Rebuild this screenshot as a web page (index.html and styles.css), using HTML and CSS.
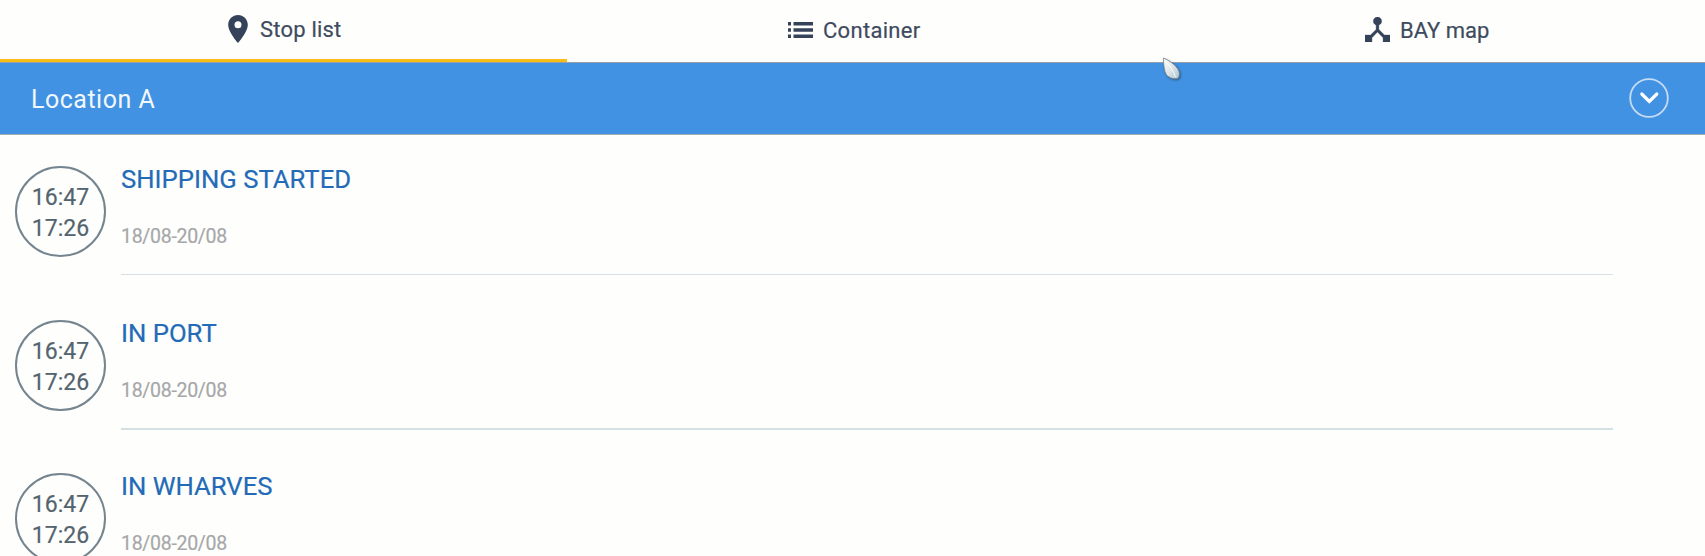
FILE: index.html
```html
<!DOCTYPE html>
<html lang="en">
<head>
<meta charset="utf-8">
<title>Stop list</title>
<link rel="stylesheet" href="styles.css">
</head>
<body>
<nav class="tabs">
  <a class="tab tab-stops active">
    <svg class="icon pin" viewBox="5 2 14 20"><path d="M12 2C8.130 2 5 5.130 5 9c0 5.250 7 13 7 13s7-7.750 7-13c0-3.870-3.130-7-7-7zm0 9.500a2.500 2.500 0 1 1 0-5 2.500 2.500 0 0 1 0 5z"/></svg>
    <span class="label">Stop list</span>
  </a>
  <a class="tab tab-container">
    <svg class="icon list" viewBox="0 0 25 16"><path d="M0 0h3v3.500H0zM0 6.250h3v3.500H0zM0 12.500h3V16H0zM5.500 0H25v3.500H5.500zM5.500 6.250H25v3.500H5.500zM5.500 12.500H25V16H5.500z"/></svg>
    <span class="label">Container</span>
  </a>
  <a class="tab tab-bay">
    <svg class="icon hub" viewBox="3 3 18 18"><path d="M17 16l-4-4V8.820C14.160 8.400 15 7.300 15 6c0-1.660-1.340-3-3-3S9 4.340 9 6c0 1.300.84 2.400 2 2.820V12l-4 4H3v5h5v-3.050l4-4.200 4 4.200V21h5v-5h-4z"/></svg>
    <span class="label">BAY map</span>
  </a>
</nav>
<header class="location">
  <h1 class="location-name">Location A</h1>
  <svg class="toggle" viewBox="0 0 40 40"><circle cx="20" cy="20" r="18.800"/><path d="M12.800 16l7.500 7.500 7.500-7.500"/></svg>
</header>
<main class="stops">
  <section class="stop">
    <div class="times"><span>16:47</span><span>17:26</span></div>
    <div class="details"><h2 class="title">SHIPPING STARTED</h2><p class="dates">18/08-20/08</p></div>
  </section>
  <section class="stop">
    <div class="times"><span>16:47</span><span>17:26</span></div>
    <div class="details strong"><h2 class="title">IN PORT</h2><p class="dates">18/08-20/08</p></div>
  </section>
  <section class="stop">
    <div class="times"><span>16:47</span><span>17:26</span></div>
    <div class="details"><h2 class="title">IN WHARVES</h2><p class="dates">18/08-20/08</p></div>
  </section>
</main>
<svg class="pointer" viewBox="0 0 24 28">
  <defs><linearGradient id="leaf" x1="0" y1="0" x2="1" y2="1"><stop offset="0" stop-color="#fff"/><stop offset=".5" stop-color="#dfe5e7"/><stop offset="1" stop-color="#a9c4d3"/></linearGradient></defs>
  <path class="leaf" d="M3.500 2C9 4.500 14.500 8 17.500 12.500c2.300 3.500 2.500 7 .5 9.800-4 1.200-8.500-.3-11.500-3.300C4 14.500 3.500 8 3.500 2z"/>
  <path class="vein" d="M5 5c4.500 4.500 8.500 9.500 10.500 16"/>
</svg>
</body>
</html>
```
FILE: styles.css
```css
* { box-sizing: border-box; }
body {
  margin: 0;
  height: 556px;
  overflow: hidden;
  background: #fefefd;
  font-family: Roboto, sans-serif;
}
h1, h2, p { margin: 0; font-weight: 400; }
.tabs {
  display: grid;
  grid-template-columns: 567px 570px 568px;
  height: 63px;
  border-bottom: 1px solid #999da5;
}
.tab {
  display: flex;
  align-items: flex-start;
  color: #3e4b5e;
  font-size: 22px;
  line-height: 26px;
}
.active { border-bottom: 3px solid #f8bd16; letter-spacing: 0.200px; }
.tab-stops { padding: 17px 0 0 228px; }
.tab-container { padding: 18px 0 0 221px; letter-spacing: 0.300px; }
.tab-bay { padding: 18px 0 0 228px; }
.icon { fill: #35435a; flex: none; }
.pin { width: 20px; height: 28px; margin: -2px 12px 0 0; }
.list { width: 25px; height: 16px; margin: 4px 10px 0 0; }
.hub { width: 25px; height: 25px; margin: -1px 10px 0 0; stroke: #35435a; stroke-width: 0.250; }
.label { -webkit-text-stroke: 0.200px #3e4b5e; }
.location {
  display: flex;
  align-items: flex-start;
  justify-content: space-between;
  height: 72px;
  padding: 15px 36px 0 31px;
  background: #4192e3;
  border-bottom: 1px solid #a1adb9;
}
.location-name { color: #f2f7fc; font-size: 25px; line-height: 44px; letter-spacing: 0.500px; }
.toggle { width: 40px; height: 40px; fill: none; stroke-width: 1.800; stroke: #c5dcf4; }
.toggle path { stroke: #fff; stroke-width: 3.200; stroke-linecap: round; }
.stops { height: 421px; overflow: hidden; padding-left: 15px; }
.stop { display: flex; gap: 15px; height: 153.700px; padding-top: 31px; }
.times {
  display: flex;
  flex-direction: column;
  align-items: center;
  flex: none;
  width: 91px;
  height: 91px;
  padding-top: 14px;
  border: 2px solid #75858f;
  border-radius: 50%;
  color: #53646f;
  font-size: 23px;
  line-height: 31px;
  -webkit-text-stroke: 0.200px #53646f;
}
.details {
  width: 1492px;
  height: 109px;
  border-bottom: 1px solid #d5dfe5;
}
.strong { height: 110px; border-bottom: 2px solid #d5e0e5; }
.title { color: #236bb7; font-size: 25.700px; line-height: 27px; -webkit-text-stroke: 0.200px #236bb7; }
.dates { margin-top: 32px; color: #a6a7a9; font-size: 19.500px; line-height: 24px; letter-spacing: -0.300px; -webkit-text-stroke: 0.200px #a6a7a9; }
.pointer {
  position: absolute;
  left: 1160px;
  top: 56px;
  width: 24px;
  height: 28px;
  filter: drop-shadow(1px 1px 1px rgba(30, 50, 70, 0.600));
}
.leaf { fill: url(#leaf); stroke: #79858c; stroke-width: 0.800; }
.vein { fill: none; stroke: #fff; stroke-width: 0.900; }
```
